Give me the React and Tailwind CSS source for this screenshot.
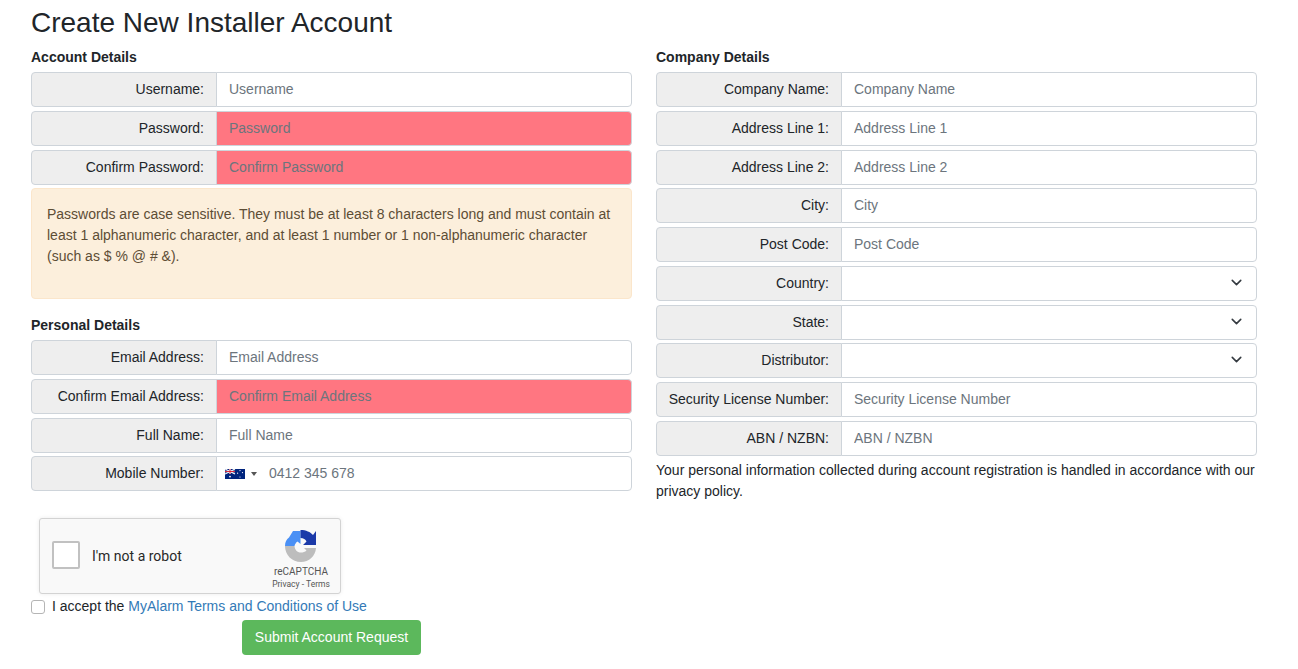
import { ChevronDown } from "lucide-react";

function Row({ label, placeholder, error }) {
  return (
    <div className="flex h-[35px] mb-[3.75px] text-[14px]">
      <label className="w-[186px] shrink-0 flex items-center justify-end pr-[12px] bg-[#eeeeee] border border-[#ced4da] rounded-l-[4px] text-[#212529]">
        {label}
      </label>
      <input
        placeholder={placeholder}
        className={`flex-1 min-w-0 -ml-px px-[12px] border border-[#ced4da] rounded-r-[4px] outline-none placeholder:text-[#6c757d] ${error ? "bg-[#ff7681]" : "bg-white"}`}
      />
    </div>
  );
}

function SelectRow({ label }) {
  return (
    <div className="flex h-[35px] mb-[3.75px] text-[14px]">
      <label className="w-[186px] shrink-0 flex items-center justify-end pr-[12px] bg-[#eeeeee] border border-[#ced4da] rounded-l-[4px] text-[#212529]">
        {label}
      </label>
      <div className="relative flex-1 -ml-px">
        <select className="w-full h-full px-[12px] appearance-none bg-white border border-[#ced4da] rounded-r-[4px] outline-none">
          <option></option>
        </select>
        <ChevronDown size={17} strokeWidth={2.2} className="absolute right-[12px] top-[8px] text-[#343a40] pointer-events-none" />
      </div>
    </div>
  );
}

function PhoneRow() {
  return (
    <div className="flex h-[35px] text-[14px]">
      <label className="w-[186px] shrink-0 flex items-center justify-end pr-[12px] bg-[#eeeeee] border border-[#ced4da] rounded-l-[4px] text-[#212529]">
        Mobile Number:
      </label>
      <div className="flex-1 -ml-px flex items-center pl-[8px] bg-white border border-[#ced4da] rounded-r-[4px]">
        <svg width="20" height="10" viewBox="0 0 20 10" className="shrink-0">
          <rect width="20" height="10" fill="#00247d" />
          <path d="M0 0l10 5M10 0L0 5" stroke="#fff" strokeWidth="1.1" />
          <path d="M5 0v5M0 2.5h10" stroke="#fff" strokeWidth="1.7" />
          <path d="M5 0v5M0 2.5h10" stroke="#cf142b" strokeWidth="0.9" />
          <circle cx="5" cy="7.6" r="0.9" fill="#fff" />
          <circle cx="15" cy="1.6" r="0.6" fill="#fff" />
          <circle cx="15" cy="8" r="0.6" fill="#fff" />
          <circle cx="12.6" cy="4.2" r="0.6" fill="#fff" />
          <circle cx="17.5" cy="3.6" r="0.6" fill="#fff" />
        </svg>
        <span className="ml-[6px] w-0 h-0 border-x-[3px] border-x-transparent border-t-[4px] border-t-[#555555]" />
        <input
          placeholder="0412 345 678"
          className="flex-1 min-w-0 ml-[12px] outline-none placeholder:text-[#6c757d]"
        />
      </div>
    </div>
  );
}

function Captcha() {
  return (
    <div className="ml-[8px] w-[302px] h-[76px] flex bg-[#f9f9f9] border border-[#d3d3d3] rounded-[3px] shadow-[0_0_4px_rgba(0,0,0,0.08)]">
      <div className="w-[28px] h-[28px] ml-[12px] mt-[22px] bg-white border-2 border-[#c1c1c1] rounded-[2px] shrink-0" />
      <span className="ml-[12px] mt-[29px] text-[14px] leading-[17px] text-[#282828] font-['Roboto',sans-serif]">I'm not a robot</span>
      <div className="ml-auto w-[70px] mr-[4px] flex flex-col items-center pt-[11px] font-['Roboto',sans-serif]">
        <svg width="32" height="32" viewBox="0 0 32 32">
          <path d="M0 16C0 12 1.500 9.500 4 7.500L8 1H15.500V14L12.500 11.500C11 12.500 10 14 9.500 16Z" fill="#4a90f5" />
          <path d="M15.500 0C21 0 25.500 2 28 5L31 1V15H18L21.500 11.500C20.500 9.500 18.500 8 15.500 8Z" fill="#1c3aa9" />
          <path d="M0 16H9.500C10 20 12 22.500 16 22.500C18 22.500 20 22 21.500 20.500L19 18H31C30.500 26 24 32 16 32C7 32 0 25 0 16Z" fill="#bdbdbd" />
        </svg>
        <span className="mt-[3px] text-[10px] leading-[13px] text-[#555555]">reCAPTCHA</span>
        <span className="text-[8.5px] leading-[12px] text-[#555555]">Privacy - Terms</span>
      </div>
    </div>
  );
}

export default function App() {
  return (
    <div className="w-[1298px] h-[669px] overflow-hidden bg-white px-[31px] font-['Liberation_Sans',Arial,sans-serif] text-[#212529]">
      <h1 className="text-[28px] leading-[34px] pt-[6px] mb-[9px]">Create New Installer Account</h1>

      <div className="flex gap-[24px] w-[1226px]">
        {/* Left column */}
        <div className="w-[601px]">
          <h5 className="text-[14px] font-bold leading-[17px] mb-[6px]">Account Details</h5>
          <Row label="Username:" placeholder="Username" />
          <Row label="Password:" placeholder="Password" error />
          <Row label="Confirm Password:" placeholder="Confirm Password" error />
          <div className="h-[111px] pt-[15px] pb-[16px] px-[15px] bg-[#fcefdc] border border-[#fbe6cb] rounded-[4px] text-[14px] leading-[21px] text-[#5c4d35]">
            Passwords are case sensitive. They must be at least 8 characters long and must contain at least 1 alphanumeric character, and at least 1 number or 1 non-alphanumeric character (such as $ % @ # &amp;).
          </div>
          <h5 className="text-[14px] font-bold leading-[17px] mt-[17.75px] mb-[6px]">Personal Details</h5>
          <Row label="Email Address:" placeholder="Email Address" />
          <Row label="Confirm Email Address:" placeholder="Confirm Email Address" error />
          <Row label="Full Name:" placeholder="Full Name" />
          <PhoneRow />

          <div className="mt-[27px]">
            <Captcha />
          </div>
          <div className="flex items-center h-[21px] mt-[2px] text-[14px]">
            <input type="checkbox" className="appearance-none w-[14px] h-[14px] bg-white border border-[#b5b5b5] rounded-[3px]" />
            <span className="ml-[7px]">
              I accept the <a className="text-[#337ab7]">MyAlarm Terms and Conditions of Use</a>
            </span>
          </div>
          <div className="ml-[211px] mt-[3px]">
            <button className="w-[179px] h-[35px] bg-[#5cb85c] text-white text-[14px] rounded-[4px]">
              Submit Account Request
            </button>
          </div>
        </div>

        {/* Right column */}
        <div className="w-[601px]">
          <h5 className="text-[14px] font-bold leading-[17px] mb-[6px]">Company Details</h5>
          <Row label="Company Name:" placeholder="Company Name" />
          <Row label="Address Line 1:" placeholder="Address Line 1" />
          <Row label="Address Line 2:" placeholder="Address Line 2" />
          <Row label="City:" placeholder="City" />
          <Row label="Post Code:" placeholder="Post Code" />
          <SelectRow label="Country:" />
          <SelectRow label="State:" />
          <SelectRow label="Distributor:" />
          <Row label="Security License Number:" placeholder="Security License Number" />
          <Row label="ABN / NZBN:" placeholder="ABN / NZBN" />
          <p className="text-[14px] leading-[21px]">
            Your personal information collected during account registration is handled in accordance with our privacy policy.
          </p>
        </div>
      </div>
    </div>
  );
}
